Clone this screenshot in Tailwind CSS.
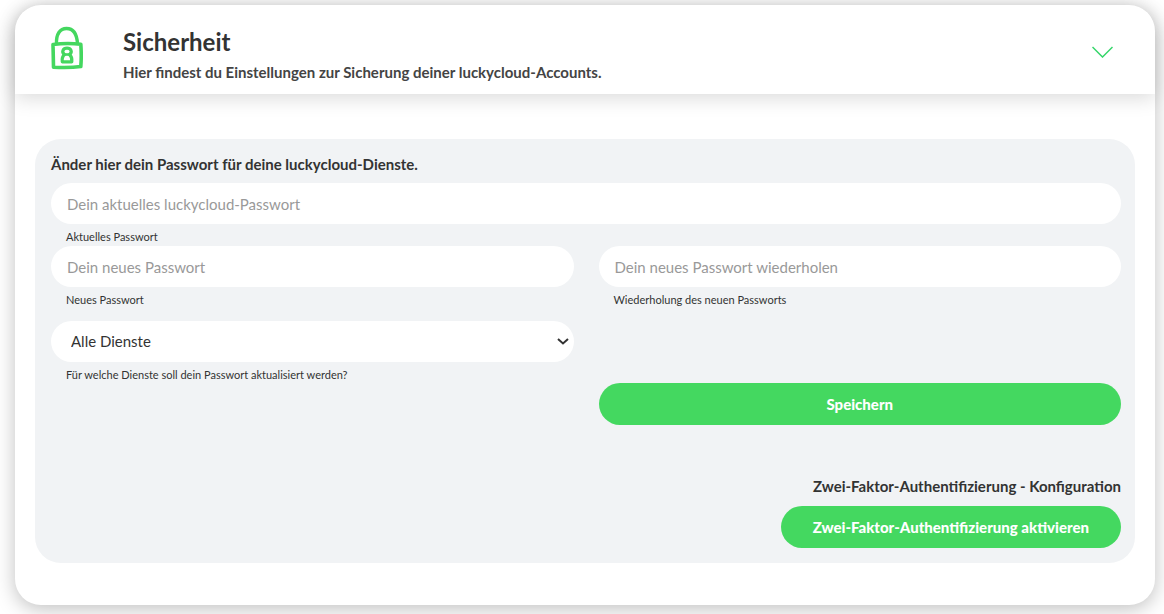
<!DOCTYPE html>
<html lang="de">
<head>
<meta charset="utf-8">
<meta name="viewport" content="width=device-width, initial-scale=1">
<title>Sicherheit</title>
<script src="https://cdn.jsdelivr.net/npm/@tailwindcss/browser@4"></script>
</head>
<body class="bg-white px-[15px] pt-[5px] pr-[9px] pb-[9px] font-['Lato','Open_Sans',sans-serif] text-[#333333]">
<main class="rounded-[26px] bg-white shadow-[0_4px_20px_rgba(0,0,0,0.25)]">
  <header class="flex items-center rounded-t-[26px] pt-[21px] pr-[42px] pb-3 pl-9 shadow-[0_4px_20px_rgba(0,0,0,0.15)]">
    <svg class="mb-3 h-11 w-8 shrink-0" viewBox="0 0 32 44" fill="none" stroke="#44d75f" aria-hidden="true">
      <path d="M5.500 18C5 8 9 2.500 15.500 2.500S26 8 26.500 18" stroke-width="3.400"/>
      <path d="M2 18.500C11 17.300 21 17.300 29.800 18.200C30.400 26 30.400 33 29.800 40.500C21 41.700 11 41.600 2.500 41.200C2.300 33 2.200 26 2 18.500Z" stroke-width="3.600" stroke-linejoin="round"/>
      <path d="M13.500 28.500C10.200 26 12 22.200 16 22.200S21.800 26 18.500 28.500C20.800 30.500 21.200 32.500 20.800 35.800H11.300C10.800 32.500 11.200 30.500 13.500 28.500Z" stroke-width="3.200" stroke-linejoin="round"/>
      <path d="M13.500 28.500H18.500" stroke-width="2.600"/>
    </svg>
    <div class="ml-10 flex-1">
      <h1 class="text-2xl leading-8 font-bold">Sicherheit</h1>
      <p class="mt-1 text-[15px] leading-5 font-bold text-[#444444]">Hier findest du Einstellungen zur Sicherung deiner luckycloud-Accounts.</p>
    </div>
    <button type="button" aria-label="Abschnitt einklappen" class="mb-1 cursor-pointer">
      <svg class="h-3 w-[21px]" viewBox="0 0 21 12" fill="none" stroke="#35d66a" stroke-width="1.500" aria-hidden="true"><path d="M.5 1L10.500 11L20.500 1"/></svg>
    </button>
  </header>
  <div class="px-5 pt-[45px] pb-[42px]">
    <section class="rounded-[26px] bg-[#f1f3f5] pt-[15px] pr-[14px] pb-[15px] pl-4">
      <form>
        <h2 class="text-[15px] leading-5 font-bold">Änder hier dein Passwort für deine luckycloud-Dienste.</h2>
        <div class="mt-[9px] flex flex-col">
          <input id="current" type="password" placeholder="Dein aktuelles luckycloud-Passwort" class="h-[41px] w-full rounded-full bg-white px-4 text-[15px] placeholder:text-[#999999]">
          <label for="current" class="pt-1 pl-[15px] text-[11px] leading-[18px]">Aktuelles Passwort</label>
        </div>
        <div class="grid grid-cols-2 gap-x-[25px]">
          <div class="flex flex-col">
            <input id="new" type="password" placeholder="Dein neues Passwort" class="h-[41px] w-full rounded-full bg-white px-4 text-[15px] placeholder:text-[#999999]">
            <label for="new" class="pt-1 pl-[15px] text-[11px] leading-[18px]">Neues Passwort</label>
          </div>
          <div class="flex flex-col">
            <input id="repeat" type="password" placeholder="Dein neues Passwort wiederholen" class="h-[41px] w-full rounded-full bg-white px-4 text-[15px] placeholder:text-[#999999]">
            <label for="repeat" class="pt-1 pl-[15px] text-[11px] leading-[18px]">Wiederholung des neuen Passworts</label>
          </div>
          <div class="mt-3 flex flex-col">
            <div class="relative">
              <select id="service" class="h-[41px] w-full appearance-none rounded-full bg-white px-5 text-[15px]"><option>Alle Dienste</option></select>
              <svg class="pointer-events-none absolute top-[17px] right-[5px] h-[7px] w-3" viewBox="0 0 12 7" fill="none" stroke="#333333" stroke-width="2" aria-hidden="true"><path d="M1 1L6 5.500L11 1"/></svg>
            </div>
            <label for="service" class="pt-1 pl-[15px] text-[11px] leading-[18px]">Für welche Dienste soll dein Passwort aktualisiert werden?</label>
          </div>
          <button type="submit" class="col-start-2 row-start-3 -mt-px h-[42px] cursor-pointer rounded-full bg-[#44d860] text-[15px] font-black text-white">Speichern</button>
        </div>
      </form>
      <div class="mt-[51px] flex flex-col items-end">
        <h2 class="text-[15px] leading-5 font-bold">Zwei-Faktor-Authentifizierung - Konfiguration</h2>
        <button type="button" class="mt-[10px] h-[42px] cursor-pointer rounded-full bg-[#44d860] px-8 text-[15px] font-black text-white">Zwei-Faktor-Authentifizierung aktivieren</button>
      </div>
    </section>
  </div>
</main>
</body>
</html>
